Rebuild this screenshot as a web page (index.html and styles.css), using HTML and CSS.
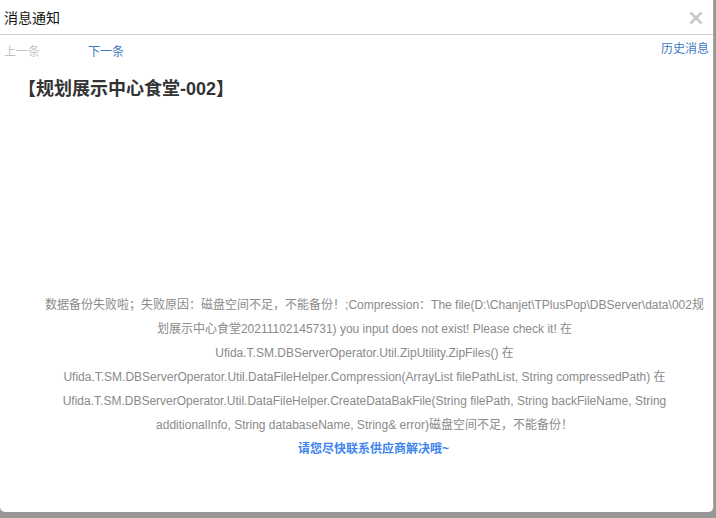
FILE: index.html
```html
<!DOCTYPE html>
<html lang="zh-CN">
<head>
    <meta charset="UTF-8">
    <meta name="viewport" content="width=device-width, initial-scale=1.0">
    <title>消息通知</title>
    <link rel="stylesheet" href="styles.css">
</head>
<body>

<div class="dialog">
    <div class="dialog-header">
        <span class="dialog-title">消息通知</span>
        <span class="close-btn" title="关闭">
            <svg width="14" height="14" viewBox="0 0 14 14"><path d="M1.5 1.5L12.5 12.5M12.5 1.5L1.5 12.5" stroke="#c8c8c8" stroke-width="2.6" fill="none"/></svg>
        </span>
    </div>

    <div class="nav">
        <a class="nav-link disabled">上一条</a>
        <a class="nav-link">下一条</a>
        <a class="nav-link history">历史消息</a>
    </div>

    <h2 class="msg-title">【规划展示中心食堂-002】</h2>

    <div class="msg-body">
        <p class="msg-text">数据备份失败啦；失败原因：磁盘空间不足，不能备份！;Compression：The file(D:\Chanjet\TPlusPop\DBServer\data\002规<br>划展示中心食堂20211102145731) you input does not exist! Please check it! 在<br>Ufida.T.SM.DBServerOperator.Util.ZipUtility.ZipFiles() 在<br>Ufida.T.SM.DBServerOperator.Util.DataFileHelper.Compression(ArrayList filePathList, String compressedPath) 在<br>Ufida.T.SM.DBServerOperator.Util.DataFileHelper.CreateDataBakFile(String filePath, String backFileName, String<br>additionalInfo, String databaseName, String&amp; error)磁盘空间不足，不能备份！</p>
        <p class="msg-tip">请您尽快联系供应商解决哦~</p>
    </div>
</div>

</body>
</html>
```

FILE: styles.css
```css
html, body { margin: 0; padding: 0; }
body { font-family: "Liberation Sans", Arial, "Noto Sans CJK SC", sans-serif; background-color: #979797; height: 518px; overflow: hidden; }
.dialog { width: 713px; height: 512px; background-color: #fff; border-right: 1px solid #a9a9a9; border-radius: 0 0 5px 5px; }
.dialog-header { height: 34px; border-bottom: 1px solid #cfcfcf; display: flex; align-items: center; justify-content: space-between; padding: 0 10px 0 4px; }
.dialog-title { font-size: 14px; color: #111; }
.close-btn { display: flex; cursor: pointer; margin-top: 1px; }
.nav { display: flex; padding: 8px 4px 0 4px; height: 18px; line-height: 18px; font-size: 12px; }
.nav-link { color: #3a78c2; cursor: pointer; }
.nav-link.disabled { color: #c4c4c4; width: 84px; cursor: default; }
.nav-link.history { margin-left: auto; margin-top: -3px; }
.msg-title { margin: 16px 0 0; padding-left: 18px; font-size: 18px; line-height: 24px; font-weight: bold; color: #333; }
.msg-body { margin-top: 192px; padding: 0 6px 0 22px; text-align: center; font-size: 12px; line-height: 24px; }
.msg-text { margin: 0; color: #8a8a8a; text-indent: 20px; }
.msg-tip { margin: 0; padding-left: 18px; color: #3d84ee; font-weight: bold; }
```
